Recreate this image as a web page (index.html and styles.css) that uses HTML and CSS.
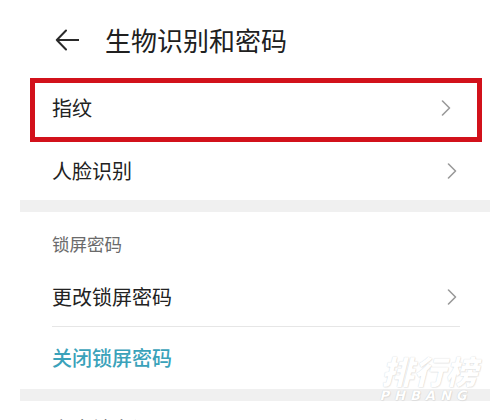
FILE: index.html
```html
<!DOCTYPE html>
<html lang="zh-CN">
<head>
<meta charset="utf-8">
<title>生物识别和密码</title>
<link rel="stylesheet" href="styles.css">
</head>
<body>
<div class="screen">
  <header class="topbar">
    <svg class="back" width="24" height="22" viewBox="0 0 24 22" aria-hidden="true">
      <path d="M11 1.5 L1.8 11 L11 20.5 M1.8 11 H23.5" fill="none" stroke="#2a2a2a" stroke-width="2" stroke-linecap="round" stroke-linejoin="round"/>
    </svg>
    <h1 class="title">生物识别和密码</h1>
  </header>

  <div class="highlight">
    <div class="row row-hl">
      <span class="label">指纹</span>
      <svg class="chev" width="10" height="16" viewBox="0 0 10 16" aria-hidden="true"><path d="M1.5 1 L8.5 8 L1.5 15" fill="none" stroke="#9a9a9a" stroke-width="1.6" stroke-linecap="round" stroke-linejoin="round"/></svg>
    </div>
  </div>

  <div class="row row-face">
    <span class="label">人脸识别</span>
    <svg class="chev" width="10" height="16" viewBox="0 0 10 16" aria-hidden="true"><path d="M1.5 1 L8.5 8 L1.5 15" fill="none" stroke="#9a9a9a" stroke-width="1.6" stroke-linecap="round" stroke-linejoin="round"/></svg>
  </div>

  <div class="band"></div>

  <div class="section-head">锁屏密码</div>

  <div class="row row-change">
    <span class="label">更改锁屏密码</span>
    <svg class="chev" width="10" height="16" viewBox="0 0 10 16" aria-hidden="true"><path d="M1.5 1 L8.5 8 L1.5 15" fill="none" stroke="#9a9a9a" stroke-width="1.6" stroke-linecap="round" stroke-linejoin="round"/></svg>
  </div>
  <div class="divider"></div>
  <div class="row row-close">
    <span class="label link">关闭锁屏密码</span>
  </div>

  <div class="band band2"></div>

  <div class="section-head next">安全锁定设置</div>

  <div class="watermark">
    <span class="wm-big">排行榜</span>
    <span class="wm-small">PHBANG</span>
  </div>
</div>
</body>
</html>
```

FILE: styles.css
```css
html, body {
  margin: 0;
  padding: 0;
  background: #ffffff;
}
body {
  font-family: "Noto Sans CJK SC", "Noto Sans", sans-serif;
  color: #222222;
  overflow: hidden;
}
.screen {
  position: relative;
  width: 498px;
  height: 420px;
  overflow: hidden;
}
.topbar {
  display: flex;
  align-items: center;
  height: 78px;
  padding-left: 55px;
  box-sizing: border-box;
}
.back {
  display: block;
  margin-right: 26px;
  margin-top: 2px;
}
.title {
  margin: 0;
  font-size: 26px;
  font-weight: 400;
  line-height: 1;
  color: #202020;
  margin-top: 2px;
}
.highlight {
  margin-left: 30px;
  width: 452px;
  height: 64px;
  box-sizing: border-box;
  border: 5px solid #d2111b;
}
.row {
  display: flex;
  align-items: center;
  justify-content: space-between;
  box-sizing: border-box;
}
.label {
  font-size: 20px;
  line-height: 1;
  color: #222;
}
.row-hl {
  height: 100%;
  padding: 0 26px 5px 17px;
}
.row-face {
  height: 58px;
  padding: 0 41px 0 52px;
}
.chev {
  display: block;
}
.band {
  height: 12px;
  margin: 0 8px 0 20px;
  background: #f0f0f0;
}
.band2 {
  height: 12px;
}
.section-head {
  height: 56px;
  padding: 23px 0 0 52px;
  box-sizing: border-box;
  font-size: 17.5px;
  line-height: 1;
  color: #6a6a6a;
}
.section-head.next {
  padding-top: 18px;
  font-size: 20px;
  color: #555;
}
.row-change {
  height: 58px;
  padding: 0 41px 0 52px;
}
.divider {
  height: 1px;
  margin: 0 38px 0 52px;
  background: #e6e6e6;
}
.row-close {
  height: 62px;
  padding: 0 41px 0 52px;
}
.link {
  color: #3aa2ba;
  font-weight: 500;
}
.watermark {
  position: absolute;
  left: 383px;
  top: 354px;
  display: flex;
  flex-direction: column;
  align-items: center;
  transform: skewX(-14deg);
  color: #ffffff;
  text-shadow: 0 0 1px rgba(0,0,0,0.2), 1px 1px 1px rgba(0,0,0,0.06);
  pointer-events: none;
}
.wm-big {
  font-size: 32px;
  font-weight: 900;
  line-height: 1;
  letter-spacing: 0;
}
.wm-small {
  font-family: "DejaVu Sans", sans-serif;
  font-size: 13px;
  font-weight: 700;
  letter-spacing: 5px;
  line-height: 1;
  margin-top: 3px;
}
```
